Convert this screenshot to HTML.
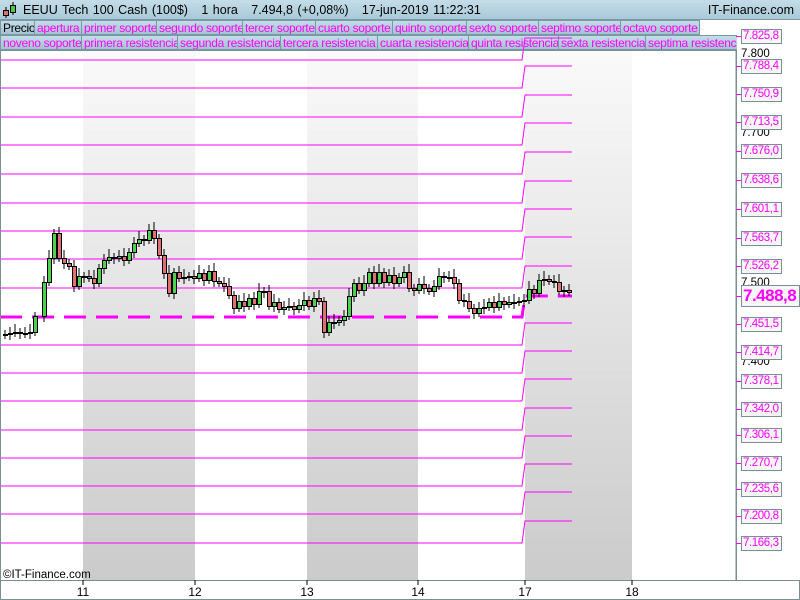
<!DOCTYPE html>
<html><head><meta charset="utf-8"><style>
body{margin:0;width:800px;height:600px;overflow:hidden;background:#fff;font-family:"Liberation Sans",sans-serif;position:relative}
#hdr{position:absolute;left:0;top:0;width:800px;height:20px;background:linear-gradient(#c4dde8,#a9cad8);border-bottom:1px solid #7a98a8;box-sizing:border-box}
#hdr .t{position:absolute;left:23px;top:3px;font-size:12.5px;color:#000;word-spacing:1px}
#hdr .r{position:absolute;right:6px;top:3px;font-size:12.5px}
.row{position:absolute;left:0;height:15px;width:737px}
.row span{position:absolute;top:0;box-sizing:border-box;height:15px;line-height:14px;font-size:12px;letter-spacing:-0.3px;color:#f0f;background:linear-gradient(#c4dde8,#a4c3d1);border:1px solid #7a98a8;border-left:none;padding-left:2px;white-space:nowrap;overflow:hidden}
.lab{position:absolute;left:741px;width:38px;height:13px;border:1px solid #7a8e98;background:#f6f6f6;color:#f0f;font-size:11.5px;letter-spacing:-0.4px;line-height:13px;padding-left:1px;overflow:hidden;white-space:nowrap}
.tk{position:absolute;left:741px;font-size:11.5px;color:#000}
</style></head><body>
<div id="hdr"><svg style="position:absolute;left:2px;top:2px" width="18" height="17"><line x1="4" y1="5" x2="4" y2="16" stroke="#000"/><rect x="1.5" y="8.5" width="5" height="5" fill="#e07070" stroke="#000"/><line x1="11" y1="0" x2="11" y2="13" stroke="#000"/><rect x="8.5" y="3.5" width="5" height="7" fill="#4c4" stroke="#000"/></svg><div class="t">EEUU Tech 100 Cash (100$) &nbsp; 1 hora &nbsp; 7.494,8 (+0,08%) &nbsp; 17-jun-2019 11:22:31</div><div class="r">IT-Finance.com</div></div>
<div id="r1" class="row" style="top:20px"></div>
<div id="r2" class="row" style="top:35px;overflow:hidden"></div>
<svg id="ch" style="position:absolute;left:0;top:0" width="800" height="600"></svg>
<div id="labs"></div>
<script>
function row(id,a){var h='';
for(var i=0;i+2<a.length;i+=2){h+='<span style="left:'+a[i+1]+'px;width:'+(a[i+3]-a[i+1])+'px;'+(i==0?'border-left:1px solid #7a98a8;':'')+(a[i]=='Precio'?'color:#000;':'')+'">'+a[i]+'</span>';}
document.getElementById(id).innerHTML=h;}
row('r1',['Precio',0,'apertura',35,'primer soporte',82,'segundo soporte',157,'tercer soporte',243,'cuarto soporte',316,'quinto soporte',393,'sexto soporte',467,'septimo soporte',539,'octavo soporte',621,'',700]);
row('r2',['noveno soporte',0,'primera resistencia',82,'segunda resistencia',178,'tercera resistencia',281,'cuarta resistencia',378,'quinta resistencia',469,'sexta resistencia',559,'septima resistencia',646,'',760]);
var s='<defs><linearGradient id="g" x1="0" y1="0" x2="0" y2="1"><stop offset="0" stop-color="#fafafa"/><stop offset="1" stop-color="#cbcbcb"/></linearGradient></defs>';
s+='<rect x="0" y="50" width="737" height="530" fill="#fff"/>';
[[83,112],[307,111],[525,107]].forEach(function(b){s+='<rect x="'+b[0]+'" y="50" width="'+b[1]+'" height="530" fill="url(#g)"/>';});
var L=[60,88,117,145,174,203,231,259,288,345,373,401,430,458,486,514,543];
L.forEach(function(y){s+='<polyline points="0,'+y+' 522,'+y+' 525,'+(y-22)+' 572,'+(y-22)+'" fill="none" stroke="#f0f" stroke-width="1"/>';});
s+='<polyline points="0,317 522,317 525,296 572,296" fill="none" stroke="#f0f" stroke-width="3" stroke-dasharray="22,10"/>';
var c=[3,334,8,333,13,332,18,333,23,333,28,332,33,316,42,282,47,258,52,233,57,258,62,263,67,266,72,286,77,276,82,276,87,278,92,283,97,268,102,260,107,257,112,258,117,256,122,260,127,252,132,243,137,239,142,240,147,230,152,238,157,255,162,273,167,293,172,272,177,278,182,277,187,276,192,278,197,273,202,280,207,271,212,281,217,283,222,286,227,295,232,308,237,301,242,306,247,298,252,304,257,291,262,291,267,306,272,302,277,309,282,307,287,306,292,309,297,305,302,300,307,306,312,298,317,301,322,332,327,322,332,322,337,320,342,316,347,296,352,283,357,290,362,283,367,272,372,283,377,272,382,282,387,275,392,283,397,277,402,272,407,288,412,290,417,284,422,288,427,291,432,286,437,276,442,277,447,277,452,283,457,300,462,301,467,308,472,313,477,308,482,307,487,302,492,307,497,301,502,304,507,302,512,302,517,301,522,300,527,289,532,293,537,280,542,279,547,281,552,282,557,291,562,290,567,292];
var prev=335;
for(var i=0;i<c.length;i+=2){var x=c[i],y=c[i+1],o=prev,t=Math.min(o,y),h=Math.max(Math.abs(o-y),1);
s+='<line x1="'+(x+2)+'" y1="'+(t-4-(i%6))+'" x2="'+(x+2)+'" y2="'+(t+h+4+(i%4))+'" stroke="#000"/>';
s+='<rect x="'+x+'.5" y="'+t+'.5" width="4" height="'+h+'" fill="'+(y<o?'#4cd24c':'#e07070')+'" stroke="#000"/>';prev=y;}
s+='<rect x="0.5" y="50.5" width="736" height="530" fill="none" stroke="#7a8e98"/>';
s+='<line x1="736" y1="50" x2="736" y2="600" stroke="#7a8e98"/>';
s+='<rect x="0" y="581" width="800" height="19" fill="#fff"/><rect x="0.5" y="580.5" width="799" height="19" fill="none" stroke="#7a8e98"/>';
[[83,"11"],[195,"12"],[307,"13"],[418,"14"],[525,"17"],[632,"18"]].forEach(function(a){s+='<line x1="'+a[0]+'" y1="580" x2="'+a[0]+'" y2="585" stroke="#000"/><text x="'+a[0]+'" y="596" font-size="12" text-anchor="middle" font-family="Liberation Sans">'+a[1]+'</text>';});
s+='<text x="3" y="578" font-size="11.5" font-family="Liberation Sans">©IT-Finance.com</text>';
document.getElementById('ch').innerHTML=s;
var lb=[["7.825,8",36],["7.788,4",66],["7.750,9",94],["7.713,5",122],["7.676,0",151],["7.638,6",180],["7.601,1",209],["7.563,7",238],["7.526,2",266],["7.451,5",324],["7.414,7",352],["7.378,1",381],["7.342,0",409],["7.306,1",435],["7.270,7",463],["7.235,6",489],["7.200,8",516],["7.166,3",543]];
var h='<div class="tk" style="top:48px">7.800</div><div class="tk" style="top:127px">7.700</div><div class="tk" style="top:277px">7.500</div><div class="tk" style="top:356px">7.400</div>';
lb.forEach(function(a){h+='<div style="position:absolute;left:736px;top:'+a[1]+'px;width:5px;height:1px;background:#f0f"></div><div class="lab" style="top:'+(a[1]-7)+'px">'+a[0]+'</div>';});
h+='<div style="position:absolute;left:736px;top:296px;width:5px;height:1px;background:#f0f"></div><div class="lab" style="top:285px;width:56px;height:20px;line-height:20px;font-size:17px;font-weight:bold;letter-spacing:-0.5px">7.488,8</div>';
document.getElementById('labs').innerHTML=h;
</script>
</body></html>
